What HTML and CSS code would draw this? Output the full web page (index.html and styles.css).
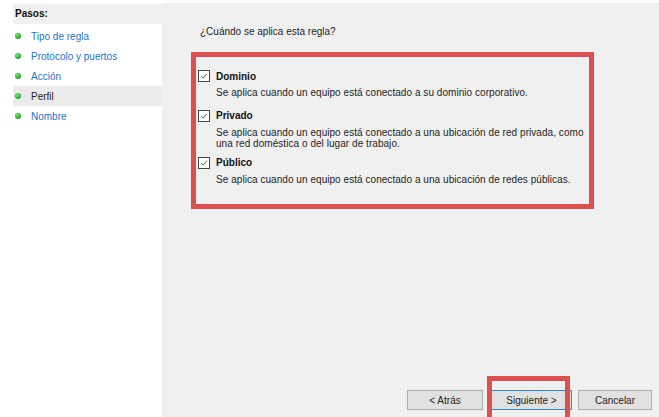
FILE: index.html
```html
<!DOCTYPE html>
<html lang="es">
<head>
<meta charset="utf-8">
<link rel="stylesheet" href="styles.css">
</head>
<body>
<div class="window">
  <aside class="steps">
    <div class="steps__title">Pasos:</div>
    <ul class="steps__list">
      <li class="step"><span class="step__dot"></span><span class="step__link">Tipo de regla</span></li>
      <li class="step"><span class="step__dot"></span><span class="step__link">Protocolo y puertos</span></li>
      <li class="step"><span class="step__dot"></span><span class="step__link">Acción</span></li>
      <li class="step step--current"><span class="step__dot"></span><span class="step__text">Perfil</span></li>
      <li class="step"><span class="step__dot"></span><span class="step__link">Nombre</span></li>
    </ul>
  </aside>
  <div class="divider"></div>
  <main class="content">
    <p class="question">¿Cuándo se aplica esta regla?</p>
    <div class="options">
      <div class="option">
        <div class="option__head"><span class="check"><svg width="12" height="12" viewBox="0 0 12 12"><path d="M2.5 6.2 L5 8.6 L9.6 3.2" fill="none" stroke="#444" stroke-width="1"/></svg></span><span class="option__label">Dominio</span></div>
        <p class="option__desc">Se aplica cuando un equipo está conectado a su dominio corporativo.</p>
      </div>
      <div class="option option--tight">
        <div class="option__head"><span class="check"><svg width="12" height="12" viewBox="0 0 12 12"><path d="M2.5 6.2 L5 8.6 L9.6 3.2" fill="none" stroke="#444" stroke-width="1"/></svg></span><span class="option__label">Privado</span></div>
        <p class="option__desc">Se aplica cuando un equipo está conectado a una ubicación de red privada, como<br>una red doméstica o del lugar de trabajo.</p>
      </div>
      <div class="option">
        <div class="option__head"><span class="check"><svg width="12" height="12" viewBox="0 0 12 12"><path d="M2.5 6.2 L5 8.6 L9.6 3.2" fill="none" stroke="#444" stroke-width="1"/></svg></span><span class="option__label">Público</span></div>
        <p class="option__desc">Se aplica cuando un equipo está conectado a una ubicación de redes públicas.</p>
      </div>
    </div>
    <div class="buttons">
      <button class="btn">&lt; Atrás</button>
      <button class="btn btn--default">Siguiente &gt;</button>
      <button class="btn btn--last">Cancelar</button>
    </div>
  </main>
  <div class="highlight"></div>
</div>
</body>
</html>
```
FILE: styles.css
```css
* { box-sizing: border-box; }
html, body {
  margin: 0;
  padding: 0;
  width: 659px;
  height: 417px;
  overflow: hidden;
  font-family: "Liberation Sans", Arial, sans-serif;
  font-size: 10px;
  color: #1e1e1e;
}
.window {
  position: relative;
  display: flex;
  width: 659px;
  height: 417px;
  background: #fff;
}
.steps {
  width: 162px;
  flex: none;
  background: #fff;
  padding-top: 4px;
}
.steps__title {
  margin-left: 13px;
  height: 20px;
  line-height: 20px;
  padding-left: 2px;
  background: #f0f0f0;
  font-weight: bold;
  color: #111;
}
.steps__list {
  list-style: none;
  margin: 2px 0 0 0;
  padding: 0;
}
.step {
  display: flex;
  align-items: center;
  height: 20px;
  margin-left: 13px;
}
.step--current { background: #ebebeb; }
.step__dot {
  width: 6px;
  height: 6px;
  border-radius: 50%;
  background: radial-gradient(circle at 40% 35%, #7ee37e 0, #22b022 60%, #168a16 100%);
  margin-left: 2px;
  margin-right: 10px;
}
.step__link { color: #2275c8; }
.step__text { color: #1e1e1e; }
.divider {
  width: 4px;
  flex: none;
  background: linear-gradient(to right, #f6f6f6 0, #e6e6e6 25%, #fafafa 50%, #e8e8e8 75%, #f0f0f0 100%);
  border-top: 3px solid #fff;
}
.content {
  flex: 1;
  display: flex;
  flex-direction: column;
  background: #f0f0f0;
  border-top: 3px solid #fafafa;
  padding: 23px 7px 7px 25px;
}
.question {
  margin: 0 0 14px 9px;
  line-height: 12px;
}
.options {
  width: 403px;
  height: 157px;
  border: 5px solid #dc5050;
  padding: 12px 0 0 2px;
}
.option { margin-bottom: 10px; }
.option--tight { margin-bottom: 6px; }
.option__head {
  display: flex;
  align-items: center;
  height: 14px;
}
.check {
  width: 12px;
  height: 12px;
  border: 1px solid #444;
  background: #fff;
  display: flex;
  align-items: center;
  justify-content: center;
  margin-right: 6px;
}
.check svg { display: block; }
.option__label {
  font-weight: bold;
  color: #111;
}
.option__desc {
  margin: 4px 0 0 18px;
  line-height: 11.5px;
  letter-spacing: 0.05px;
}
.buttons {
  margin-top: auto;
  display: flex;
  justify-content: flex-end;
  gap: 8px;
}
.btn {
  width: 76px;
  height: 20px;
  padding: 0;
  font-family: inherit;
  font-size: 10px;
  color: #1e1e1e;
  background: #e1e1e1;
  border: 1px solid #adadad;
}
.btn--default {
  width: 81px;
  border-color: #2a8ad4;
}
.btn--last { margin-left: -2px; width: 74px; }
.highlight {
  position: absolute;
  left: 487px;
  top: 376px;
  width: 83px;
  height: 50px;
  border: 5px solid #dc5050;
}
```
